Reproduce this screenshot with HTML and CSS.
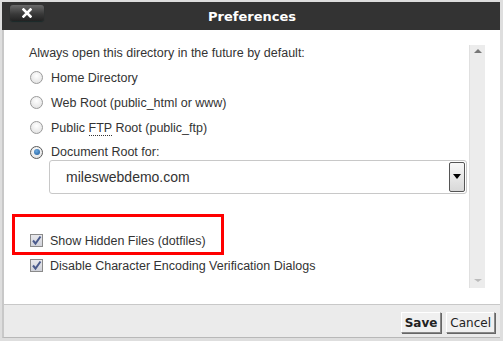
FILE: index.html
```html
<!DOCTYPE html>
<html>
<head>
<meta charset="utf-8">
<link rel="stylesheet" href="styles.css">
</head>
<body>
<div class="page">
  <div class="dialog">
    <div class="header">
      <button class="close"><svg width="10" height="10" viewBox="0 0 10 10"><path d="M1.5 1.5 L8.5 8.5 M8.5 1.5 L1.5 8.5" stroke="#fff" stroke-width="2.6" stroke-linecap="square"/></svg></button>
      <div class="title">Preferences</div>
    </div>
    <div class="body">
      <div class="content">
        <div class="row head">Always open this directory in the future by default:</div>
        <label class="row"><span class="radio"></span><span>Home Directory</span></label>
        <label class="row"><span class="radio"></span><span>Web Root (public_html or www)</span></label>
        <label class="row"><span class="radio"></span><span>Public <abbr class="ftp">FTP</abbr> Root (public_ftp)</span></label>
        <label class="row short"><span class="radio on"></span><span>Document Root for:</span></label>
        <div class="select">
          <span class="sel-text">mileswebdemo.com</span>
          <span class="sel-btn"><span class="tri"></span></span>
        </div>
        <label class="row chk-first"><span class="check"><svg width="11" height="11" viewBox="0 0 11 11"><path d="M2 5.5 L4.5 8.5 L9.5 1.5" fill="none" stroke="#4a5a8c" stroke-width="2"/></svg></span><span>Show Hidden Files (dotfiles)</span></label>
        <label class="row"><span class="check"><svg width="11" height="11" viewBox="0 0 11 11"><path d="M2 5.5 L4.5 8.5 L9.5 1.5" fill="none" stroke="#4a5a8c" stroke-width="2"/></svg></span><span>Disable Character Encoding Verification Dialogs</span></label>
        <div class="highlight"></div>
      </div>
      <div class="scrollbar">
        <span class="arrow up"></span>
        <span class="arrow down"></span>
      </div>
    </div>
    <div class="footer">
      <button class="btn save">Save</button>
      <button class="btn cancel">Cancel</button>
    </div>
  </div>
</div>
</body>
</html>
```
FILE: styles.css
```css
html, body {
  margin: 0;
  padding: 0;
}
body {
  background: #dedede;
  font-family: "Liberation Sans", Arial, sans-serif;
}
.page {
  width: 503px;
  height: 341px;
  overflow: hidden;
  background: #dedede;
  padding-top: 2px;
  box-sizing: border-box;
}
.dialog {
  width: 498px;
  margin-left: 2px;
  background: #fff;
  border-left: 2px solid #c8c8c8;
  box-sizing: border-box;
}
.header {
  height: 28px;
  background: #333;
  margin-left: -2px;
  display: flex;
  align-items: center;
  justify-content: center;
  position: relative;
}
.close {
  position: absolute;
  left: 8px;
  top: 3px;
  width: 34px;
  height: 16px;
  border: none;
  border-radius: 3px;
  background: linear-gradient(#6a6a6a, #3a3a3a 55%, #222);
  box-shadow: 0 1px 1px #1a2a2a;
  padding: 0;
  display: flex;
  align-items: center;
  justify-content: center;
}
.title {
  color: #fff;
  font-family: "DejaVu Sans", Verdana, sans-serif;
  font-weight: bold;
  font-size: 13px;
  margin-left: 2px;
}
.body {
  height: 274px;
  display: flex;
  border-bottom: 1px solid #c8c8c8;
}
.content {
  flex: 1;
  padding-left: 25px;
  padding-top: 11px;
  position: relative;
}
.row {
  display: flex;
  align-items: center;
  height: 25px;
  font-size: 12.5px;
  color: #333;
  box-sizing: border-box;
}
.row.head {
  height: 24px;
}
.row.short {
  height: 20px;
  padding-top: 4px;
}
.radio {
  width: 11px;
  height: 11px;
  border-radius: 50%;
  border: 1px solid #9a9a9a;
  background: radial-gradient(circle at 50% 35%, #fff, #ddd);
  margin-right: 8px;
  margin-left: 1px;
  position: relative;
  box-sizing: content-box;
  flex: none;
}
.radio.on {
  border-color: #5a5a5a;
}
.radio.on::after {
  content: "";
  position: absolute;
  left: 2.5px;
  top: 2.5px;
  width: 6px;
  height: 6px;
  border-radius: 50%;
  background: radial-gradient(circle at 40% 35%, #6aa8e0, #1d5a98);
}
.ftp {
  text-decoration: none;
  border-bottom: 1px dotted #333;
}
.select {
  margin-left: 20px;
  width: 418px;
  height: 34px;
  box-sizing: border-box;
  border: 1px solid #c8c8c8;
  border-radius: 3px;
  display: flex;
  align-items: center;
  justify-content: space-between;
  padding-left: 16px;
  padding-right: 1px;
}
.sel-text {
  font-size: 14px;
  color: #333;
}
.sel-btn {
  width: 16px;
  height: 30px;
  box-sizing: border-box;
  border: 1px solid #555;
  border-radius: 2px;
  background: linear-gradient(#f8f8f8, #d8d8d8);
  display: flex;
  justify-content: center;
  padding-top: 11px;
}
.tri {
  width: 0;
  height: 0;
  border-left: 4px solid transparent;
  border-right: 4px solid transparent;
  border-top: 5px solid #000;
}
.chk-first {
  margin-top: 34px;
}
.check {
  width: 11px;
  height: 11px;
  border: 1px solid #8a8a8a;
  background: linear-gradient(#e8e8ec, #d0d2da);
  margin-right: 7px;
  margin-left: 1px;
  display: flex;
  align-items: center;
  justify-content: center;
  flex: none;
}
.highlight {
  position: absolute;
  left: 8px;
  top: 184px;
  width: 212px;
  height: 41px;
  box-sizing: border-box;
  border: 3px solid #f00;
}
.scrollbar {
  width: 16px;
  height: 243px;
  margin-top: 15px;
  margin-right: 15px;
  background: #ececec;
  border-left: 1px solid #e0e0e0;
  box-sizing: border-box;
  display: flex;
  flex-direction: column;
  justify-content: space-between;
  align-items: center;
  padding: 4px 0 6px;
}
.arrow {
  width: 0;
  height: 0;
  border-left: 4px solid transparent;
  border-right: 4px solid transparent;
}
.arrow.up {
  border-bottom: 4px solid #777;
}
.arrow.down {
  border-top: 3px solid #bbb;
}
.footer {
  height: 32px;
  background: #ebebeb;
  border-bottom: 1px solid #b8b8b8;
  display: flex;
  justify-content: flex-end;
  align-items: center;
  gap: 5px;
  padding-right: 5px;
  border-left: 2px solid #c8c8c8;
  margin-left: -2px;
}
.btn {
  height: 21px;
  font-size: 12px;
  padding: 0 3px;
  border: 1px solid;
  border-color: #fff #888 #888 #fff;
  box-shadow: 1px 1px 0 #666;
  background: #f0f0f0;
  color: #222;
  margin-top: 3px;
  font-family: "DejaVu Sans", Verdana, sans-serif;
}
.save {
  font-weight: bold;
}
```
